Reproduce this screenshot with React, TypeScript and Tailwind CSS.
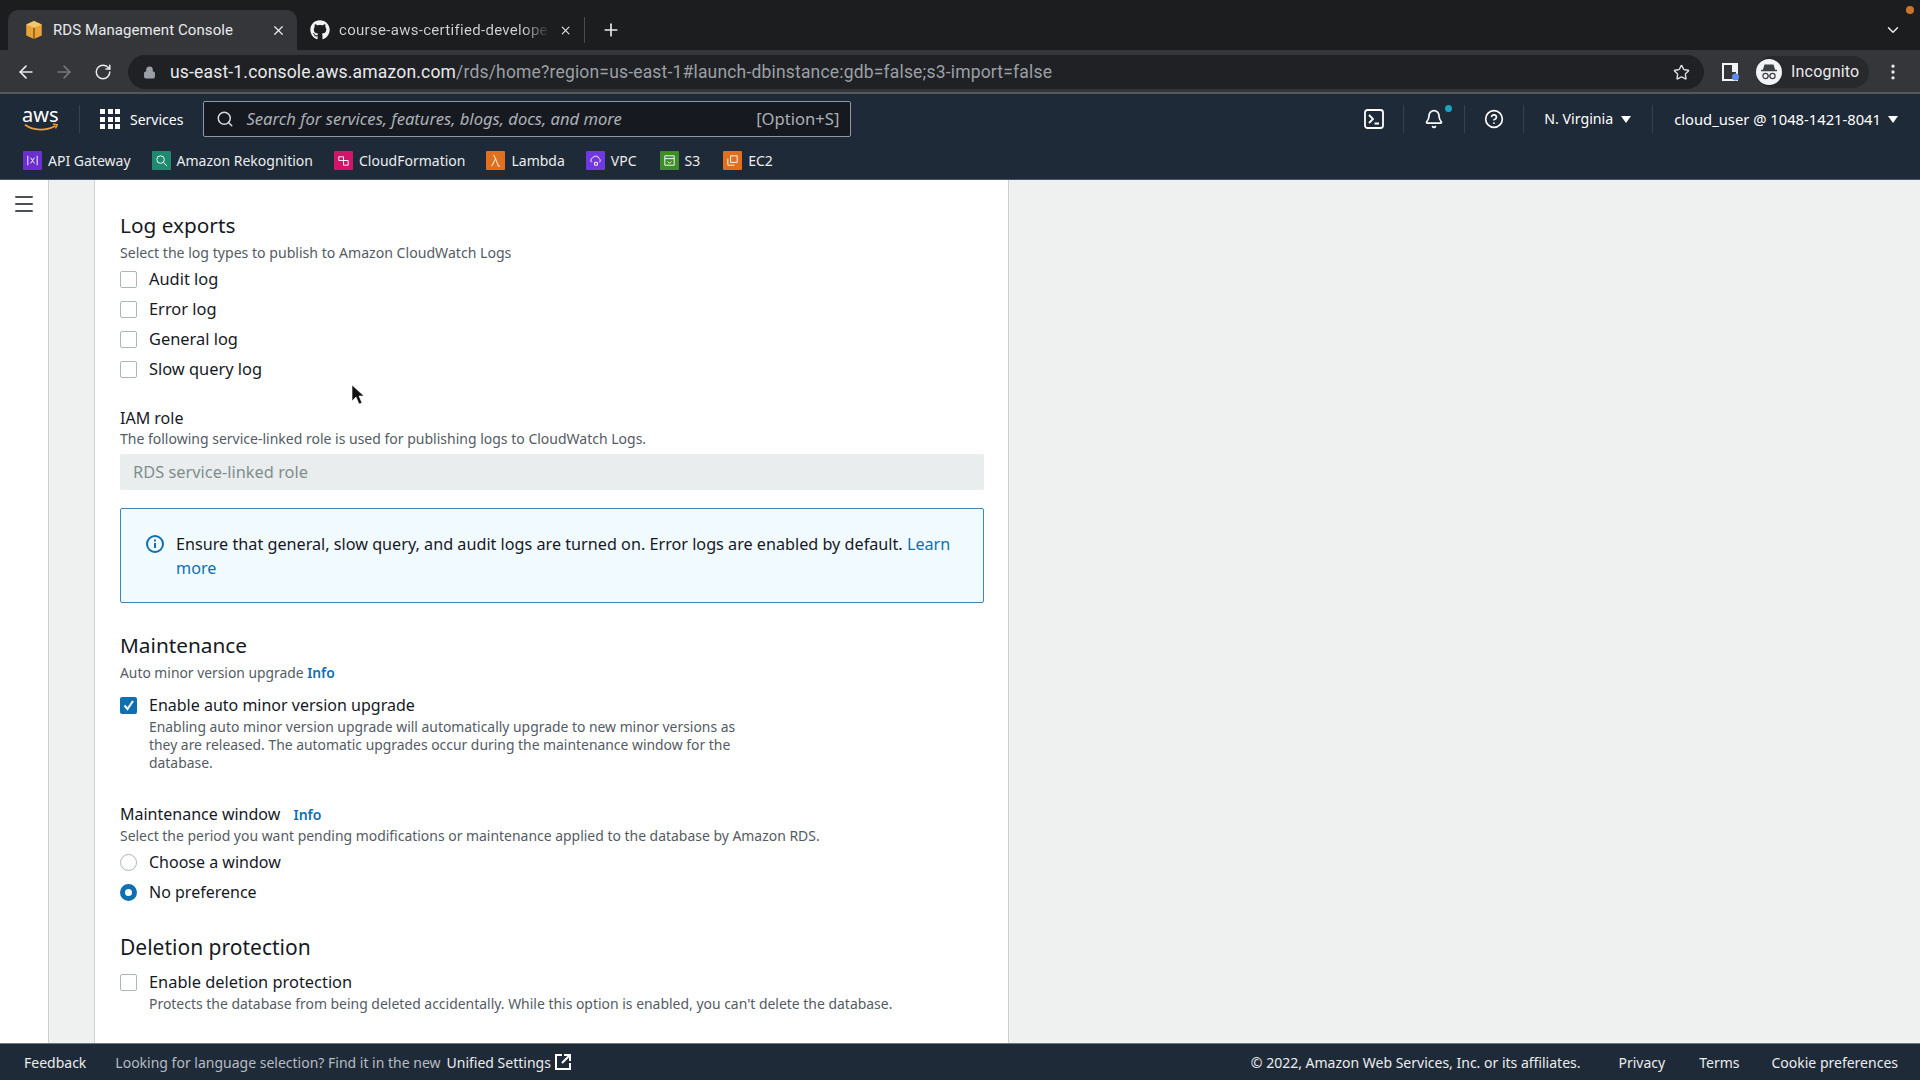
import { ArrowLeft, ArrowRight, Bell, ChevronDown, CircleHelp, EllipsisVertical, Lock, Menu, Plus, RotateCw, Search, Star, X } from "lucide-react";
import { FaGithub } from "react-icons/fa";

const ember = { fontFamily: '"Noto Sans", sans-serif' };

function Box({ checked = false }: { checked?: boolean }) {
  if (checked) {
    return (
      <span className="flex h-[17px] w-[17px] shrink-0 items-center justify-center rounded-[2px] bg-[#0f6fb0]">
        <svg viewBox="0 0 14 14" className="h-[14px] w-[14px]" fill="none" stroke="#fff" strokeWidth="2">
          <path d="M2.5 7.5 5.5 11 11 3" />
        </svg>
      </span>
    );
  }
  return <span className="h-[17px] w-[17px] shrink-0 rounded-[2px] border border-[#aab7b8] bg-white" />;
}

function Check({ label }: { label: string }) {
  return (
    <div className="flex h-[30px] items-center gap-[12px] text-[16.4px] text-[#16191f]">
      <Box />
      <span>{label}</span>
    </div>
  );
}

function Radio({ label, checked = false }: { label: string; checked?: boolean }) {
  return (
    <div className="flex h-[30px] items-center gap-[12px] text-[16px] text-[#16191f]">
      {checked ? (
        <span className="h-[17px] w-[17px] shrink-0 rounded-full border-[5px] border-[#0f6fb0] bg-white" />
      ) : (
        <span className="h-[17px] w-[17px] shrink-0 rounded-full border border-[#aab7b8] bg-white" />
      )}
      <span>{label}</span>
    </div>
  );
}

function Bookmark({ color, label, glyph, className = "" }: { color: string; label: string; glyph: React.ReactNode; className?: string }) {
  return (
    <div className={`flex items-center gap-[6px] ${className}`}>
      <span className={`flex h-[19px] w-[19px] items-center justify-center rounded-[1px] ${color}`}>
        <svg viewBox="0 0 16 16" className="h-[15px] w-[15px]" fill="none" stroke="#fff" strokeWidth="1">
          {glyph}
        </svg>
      </span>
      <span className="text-[14px] text-[#eaeded]">{label}</span>
    </div>
  );
}

function Divider({ className }: { className: string }) {
  return <span className={`h-[28px] w-px bg-[#36424f] ${className}`} />;
}

function TabStrip() {
  return (
    <div className="flex h-[50px] items-end bg-[#1c1d1f] pl-[8px]" style={{ fontFamily: "Roboto, sans-serif" }}>
      <div className="flex h-[40px] w-[289px] items-center rounded-t-[10px] bg-[#35363a] pl-[16px] pr-[11px]">
        <svg viewBox="0 0 18 18" className="h-[20px] w-[20px] shrink-0">
          <path d="M9 1 16 4v10l-7 3-7-3V4z" fill="#e8a33a" />
          <path d="M9 1 16 4 9 7 2 4z" fill="#f4c56a" />
          <path d="M9 7v10" stroke="#8a5a14" strokeWidth="1.4" />
        </svg>
        <span className="ml-[9px] flex-1 text-[15px] tracking-[0.08px] text-[#e8eaed]">RDS Management Console</span>
        <X size={15} className="text-[#e8eaed]" />
      </div>
      <div className="flex h-[40px] w-[288px] items-center pl-[13px]">
        <FaGithub size={20} className="shrink-0 text-[#f1f3f4]" />
        <span className="ml-[9px] w-[212px] whitespace-nowrap bg-[linear-gradient(to_right,#d0d2d4_88%,#2a2b2d_100%)] bg-clip-text text-[15px] tracking-[0.3px] text-transparent">
          course-aws-certified-develope
        </span>
        <X size={15} className="ml-[11px] text-[#e8eaed]" />
        <span className="ml-[12px] h-[26px] w-px bg-[#4a4b4e]" />
      </div>
      <div className="flex h-[40px] items-center pl-[16px]">
        <Plus size={20} className="text-[#e8eaed]" />
      </div>
      <div className="flex h-[40px] flex-1 items-center justify-end pr-[18px]">
        <ChevronDown size={18} className="text-[#e8eaed]" />
      </div>
    </div>
  );
}

function Toolbar() {
  return (
    <div className="flex h-[44px] items-center border-b-2 border-[#55585c] bg-[#35363a] pl-[16px] pt-[2px]" style={{ fontFamily: "Roboto, sans-serif" }}>
      <ArrowLeft size={20} className="text-[#e8eaed]" />
      <ArrowRight size={20} className="ml-[18px] text-[#76787b]" />
      <RotateCw size={18} className="ml-[20px] text-[#e8eaed]" />
      <div className="ml-[16px] flex h-[34px] w-[1576px] items-center rounded-full bg-[#202124] pl-[15px] pr-[14px]">
        <Lock size={13} fill="#9aa0a6" className="text-[#9aa0a6]" />
        <span className="ml-[14px] flex-1 whitespace-nowrap text-[17.5px] tracking-[0.18px] text-[#e8eaed]">
          us-east-1.console.aws.amazon.com<span className="text-[#9aa0a6]">/rds/home?region=us-east-1#launch-dbinstance:gdb=false;s3-import=false</span>
        </span>
        <Star size={17} className="text-[#dadce0]" />
      </div>
      <svg viewBox="0 0 18 18" className="ml-[18px] h-[18px] w-[18px]">
        <path d="M1 1h14v16H1z" fill="none" stroke="#f1f3f4" strokeWidth="2" />
        <path d="M10 1h6v8h-6z" fill="#f1f3f4" />
        <circle cx="13.5" cy="14" r="3.5" fill="#5b8def" />
      </svg>
      <div className="ml-[16px] flex h-[32px] items-center rounded-full bg-[#28292c] pr-[10px]">
        <span className="flex h-[26px] w-[26px] items-center justify-center rounded-full bg-[#f1f3f4]">
          <svg viewBox="0 0 20 20" className="h-[20px] w-[20px]" fill="none" stroke="#3c4043" strokeWidth="1.2">
            <path d="M6 3h8l1.500 5h-11z" fill="#3c4043" />
            <path d="M2 8.500h16" strokeWidth="1.5" />
            <circle cx="6.500" cy="14" r="2.600" />
            <circle cx="13.500" cy="14" r="2.600" />
            <path d="M9 14h2" />
          </svg>
        </span>
        <span className="ml-[9px] text-[16px] tracking-[0.2px] text-[#e8eaed]">Incognito</span>
      </div>
      <EllipsisVertical size={20} className="ml-[14px] text-[#e8eaed]" />
    </div>
  );
}

function AwsNav() {
  return (
    <div className="h-[86px] border-b border-[#4b5663] bg-[#1f2a38] text-white" style={ember}>
      <div className="flex h-[50px] items-center pl-[22px] pr-[22px]">
        <div className="relative h-[30px] w-[40px] shrink-0">
          <span className="block text-[20px] leading-[22px] text-white">aws</span>
          <svg viewBox="0 0 40 10" className="absolute left-0 top-[19px] h-[9px] w-[40px]" fill="none" stroke="#f29d38" strokeWidth="2">
            <path d="M1 2c10 7 24 7 34 1" />
            <path d="M32 1l5 1-2 4" strokeWidth="1.5" />
          </svg>
        </div>
        <Divider className="ml-[17px]" />
        <div className="ml-[20px] grid w-[20px] grid-cols-3 gap-[2.5px]">
          {Array.from({ length: 9 }).map((_, i) => (
            <span key={i} className="h-[5px] w-[5px] bg-white" />
          ))}
        </div>
        <span className="ml-[10px] text-[14px]">Services</span>
        <div className="ml-[20px] flex h-[36px] w-[648px] items-center rounded-[2px] border border-[#8d99a8] bg-[#16191f] pl-[12px] pr-[11px]">
          <Search size={18} className="text-[#d5dbdb]" />
          <span className="ml-[12px] flex-1 text-[16.6px] italic text-[#aab0b5]">Search for services, features, blogs, docs, and more</span>
          <span className="text-[16.6px] text-[#aab0b5]">[Option+S]</span>
        </div>
        <div className="ml-auto flex items-center">
          <svg viewBox="0 0 20 20" className="h-[20px] w-[20px]" fill="none" stroke="#fff" strokeWidth="1.8">
            <rect x="1" y="1" width="18" height="18" rx="2.500" />
            <path d="M5 6l4 4-4 4M10.500 14.500H15" />
          </svg>
          <Divider className="ml-[19px] mr-[20px]" />
          <div className="relative">
            <Bell size={20} />
            <span className="absolute -right-[8px] -top-[4px] h-[7px] w-[7px] rounded-full bg-[#18a5c0]" />
          </div>
          <Divider className="ml-[20px] mr-[19px]" />
          <CircleHelp size={20} />
          <Divider className="ml-[19px] mr-[20px]" />
          <span className="text-[14.2px]">N. Virginia</span>
          <span className="ml-[8px] h-0 w-0 border-x-[5px] border-t-[7px] border-x-transparent border-t-white" />
          <Divider className="ml-[21px] mr-[21px]" />
          <span className="text-[14.75px]">cloud_user @ 1048-1421-8041</span>
          <span className="ml-[7px] h-0 w-0 border-x-[5px] border-t-[7px] border-x-transparent border-t-white" />
        </div>
      </div>
      <div className="flex h-[33px] items-center pl-[23px]">
        <Bookmark color="bg-[#6b2fd0]" label="API Gateway" glyph={<path d="M3 3v10M13 3v10M6 5l2 3-2 3M10 5 8 8l2 3" />} />
        <Bookmark className="ml-[21px]" color="bg-[#1f8a70]" label="Amazon Rekognition" glyph={<><circle cx="7" cy="7" r="4" /><path d="M10 10l4 4" /></>} />
        <Bookmark className="ml-[21px]" color="bg-[#d0156a]" label="CloudFormation" glyph={<path d="M3 4h5v4H3zM8 8h5v5H8z" />} />
        <Bookmark className="ml-[21px]" color="bg-[#e0701e]" label="Lambda" glyph={<path d="M4 14l4-8-2-4M8 6l3 8h2" />} />
        <Bookmark className="ml-[21px]" color="bg-[#7038e0]" label="VPC" glyph={<path d="M4 10a3 3 0 0 1 1-5 4 4 0 0 1 7 1 2.500 2.500 0 0 1 0 4M7 10h3v3H7z" />} />
        <Bookmark className="ml-[23px]" color="bg-[#3f8c2a]" label="S3" glyph={<path d="M3 3h10v10H3zM3 6h10M6 9l2 2 2-2" />} />
        <Bookmark className="ml-[23px]" color="bg-[#e0701e]" label="EC2" glyph={<path d="M6 3h7v7H6zM3 6v7h7" />} />
      </div>
    </div>
  );
}

function Panel() {
  return (
    <div className="h-full w-[914px] shrink-0 overflow-hidden border-r border-[#cdd1d1] bg-white pl-[25px] pr-[24px] text-[#16191f]">
      <h2 className="mt-[31px] text-[20.8px] leading-[28px]">Log exports</h2>
      <p className="mt-[5px] text-[14.1px] leading-[18px] text-[#545b64]">Select the log types to publish to Amazon CloudWatch Logs</p>
      <div className="mt-[2px]">
        <Check label="Audit log" />
        <Check label="Error log" />
        <Check label="General log" />
        <Check label="Slow query log" />
      </div>
      <p className="mt-[23px] text-[16px] leading-[22px]">IAM role</p>
      <p className="mt-[1px] text-[14px] leading-[18px] text-[#545b64]">The following service-linked role is used for publishing logs to CloudWatch Logs.</p>
      <div className="mt-[6px] flex h-[36px] items-center rounded-[2px] bg-[#eaeded] px-[13px] text-[16.4px] text-[#7f8d8e]">RDS service-linked role</div>
      <div className="mt-[18px] flex h-[95px] rounded-[2px] border border-[#3a86b8] bg-[#f1faff] pl-[24px] pr-[20px] pt-[23px]">
        <svg viewBox="0 0 20 20" className="mt-[2px] h-[20px] w-[20px] shrink-0" fill="none" stroke="#0f6fb0" strokeWidth="2">
          <circle cx="10" cy="10" r="8" />
          <path d="M10 9v5M10 5.500v2" />
        </svg>
        <p className="ml-[11px] text-[16.2px] leading-[24px]">
          Ensure that general, slow query, and audit logs are turned on. Error logs are enabled by default. <span className="text-[#0f6fb0]">Learn more</span>
        </p>
      </div>
      <h2 className="mt-[28px] text-[20.8px] leading-[28px]">Maintenance</h2>
      <p className="mt-[5px] text-[13.85px] leading-[18px] text-[#545b64]">
        Auto minor version upgrade <span className="font-semibold text-[#0f6fb0]">Info</span>
      </p>
      <div className="mt-[8px] flex h-[30px] items-center gap-[12px] text-[16px]">
        <Box checked />
        <span>Enable auto minor version upgrade</span>
      </div>
      <p className="-mt-[2px] ml-[29px] w-[600px] text-[13.9px] leading-[18px] text-[#545b64]">
        Enabling auto minor version upgrade will automatically upgrade to new minor versions as they are released. The automatic upgrades occur during the maintenance window for the database.
      </p>
      <p className="mt-[31px] text-[16px] leading-[22px]">
        Maintenance window <span className="ml-[9px] text-[14px] font-semibold text-[#0f6fb0]">Info</span>
      </p>
      <p className="mt-[1px] text-[13.95px] leading-[18px] text-[#545b64]">Select the period you want pending modifications or maintenance applied to the database by Amazon RDS.</p>
      <div className="mt-[2px]">
        <Radio label="Choose a window" />
        <Radio label="No preference" checked />
      </div>
      <h2 className="mt-[26px] text-[21px] leading-[28px]">Deletion protection</h2>
      <div className="mt-[6px] flex h-[30px] items-center gap-[12px] text-[16.4px]">
        <Box />
        <span>Enable deletion protection</span>
      </div>
      <p className="-mt-[2px] ml-[29px] text-[13.95px] leading-[18px] text-[#545b64]">Protects the database from being deleted accidentally. While this option is enabled, you can't delete the database.</p>
    </div>
  );
}

function Footer() {
  return (
    <div className="flex h-[37px] items-center border-t border-[#6d7782] bg-[#1f2a38] pl-[24px] pr-[22px] text-[14px] text-[#eaeded]" style={ember}>
      <span>Feedback</span>
      <span className="ml-[29px] text-[#b5bcc3]">Looking for language selection? Find it in the new</span>
      <span className="ml-[6px]">Unified Settings</span>
      <svg viewBox="0 0 18 18" className="ml-[3px] h-[18px] w-[18px]" fill="none" stroke="#fff" strokeWidth="2">
        <path d="M8 2H2v14h14v-6M10 2h6v6M16 2 8 10" />
      </svg>
      <span className="ml-auto">© 2022, Amazon Web Services, Inc. or its affiliates.</span>
      <span className="ml-[38px]">Privacy</span>
      <span className="ml-[34px]">Terms</span>
      <span className="ml-[32px]">Cookie preferences</span>
    </div>
  );
}

export default function App() {
  return (
    <div className="relative flex h-[1080px] w-[1920px] flex-col overflow-hidden bg-[#eff1f0]">
      <TabStrip />
      <Toolbar />
      <AwsNav />
      <div className="flex min-h-0 flex-1" style={ember}>
        <div className="h-full w-[49px] shrink-0 border-r border-[#cdd1d1] bg-white pl-[12px] pt-[12px]">
          <Menu size={24} className="text-[#4a4f57]" />
        </div>
        <div className="w-[46px] shrink-0 border-r border-[#cdd1d1]" />
        <Panel />
      </div>
      <Footer />
      <span className="absolute left-[1906px] top-[6px] h-[8px] w-[8px] rounded-full bg-[#c9752a]" />
      <svg viewBox="0 0 14 22" className="absolute left-[351px] top-[384px] h-[22px] w-[14px]">
        <path d="M1 1v16l4-4 3 7 3-1-3-7h5z" fill="#111" stroke="#fff" strokeWidth="0.6" />
      </svg>
    </div>
  );
}
